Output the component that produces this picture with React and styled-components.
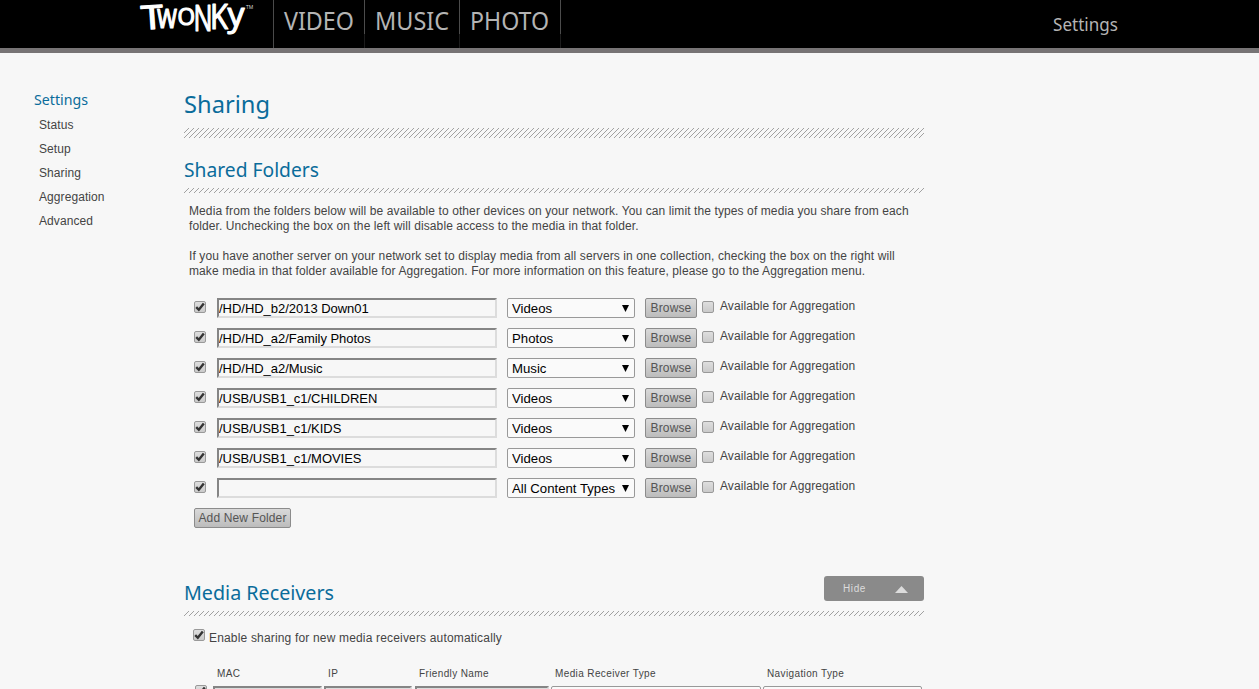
import { useState } from 'react'
import styled, { createGlobalStyle } from 'styled-components'

const navItems = [
  { name: 'VIDEO', width: 91, textWidth: 70 },
  { name: 'MUSIC', width: 95, textWidth: 74 },
  { name: 'PHOTO', width: 101, textWidth: 79 },
]

const sideItems = ['Status', 'Setup', 'Sharing', 'Aggregation', 'Advanced']

const contentTypes = ['All Content Types', 'Videos', 'Photos', 'Music']

const startFolders = [
  { path: '/HD/HD_b2/2013 Down01', type: 'Videos' },
  { path: '/HD/HD_a2/Family Photos', type: 'Photos' },
  { path: '/HD/HD_a2/Music', type: 'Music' },
  { path: '/USB/USB1_c1/CHILDREN', type: 'Videos' },
  { path: '/USB/USB1_c1/KIDS', type: 'Videos' },
  { path: '/USB/USB1_c1/MOVIES', type: 'Videos' },
  { path: '', type: 'All Content Types' },
]

const columns = [
  { name: 'MAC', width: 109, gap: 2 },
  { name: 'IP', width: 88, gap: 3 },
  { name: 'Friendly Name', width: 134, gap: 2 },
  { name: 'Media Receiver Type', width: 210, gap: 2, select: true },
  { name: 'Navigation Type', width: 159, gap: 0, select: true },
]

// text stretched to a set width, for the headings
const Fit = ({ text, width, height, size, base }) => (
  <FitSvg width={width + 4} height={height}>
    <text x="0" y={base} fontSize={size} textLength={width} lengthAdjust="spacingAndGlyphs">{text}</text>
  </FitSvg>
)

const Hatch = ({ id, height }) => (
  <HatchSvg width="740" height={height}>
    <defs>
      <pattern id={id} width="5" height="5" patternUnits="userSpaceOnUse">
        <path d="M-1 6L6 -1M-1 1L1 -1M4 6L6 4" stroke="#8b8b8b" strokeWidth="0.8" />
      </pattern>
    </defs>
    <rect width="740" height={height} fill={`url(#${id})`} />
  </HatchSvg>
)

const Check = ({ checked, onChange }) => (
  <Box type="button" role="checkbox" aria-checked={checked} onClick={onChange}>
    {checked && (
      <svg width="10" height="10" viewBox="0 0 10 10">
        <path d="M1.2 5.2L3.8 7.8L8.8 1.4" fill="none" stroke="#333" strokeWidth="2.4" />
      </svg>
    )}
  </Box>
)

const Logo = () => (
  <LogoSvg width="137" height="48" aria-label="Twonky">
    <g fill="#fff" stroke="#fff" strokeWidth="1.2" strokeLinejoin="round">
      <text x="5" y="29" fontSize="33" textLength="22" lengthAdjust="spacingAndGlyphs" transform="rotate(-4 16 16)">T</text>
      <text x="21" y="28" fontSize="34" textLength="20" lengthAdjust="spacingAndGlyphs">w</text>
      <text x="41.5" y="25" fontSize="23" textLength="17.5" lengthAdjust="spacingAndGlyphs">O</text>
      <text x="57.5" y="31" fontSize="37" textLength="19" lengthAdjust="spacingAndGlyphs">N</text>
      <text x="74" y="29" fontSize="34" textLength="18" lengthAdjust="spacingAndGlyphs">K</text>
      <text x="91.5" y="25.5" fontSize="33" textLength="17" lengthAdjust="spacingAndGlyphs">y</text>
    </g>
    <text x="110" y="8.5" fontSize="5" fill="#ddd">TM</text>
  </LogoSvg>
)

const FolderRow = ({ folder, onChange }) => (
  <Row>
    <RowCheck><Check checked={folder.shared} onChange={() => onChange({ shared: !folder.shared })} /></RowCheck>
    <PathInput value={folder.path} onChange={(e) => onChange({ path: e.target.value })} />
    <TypeSelect value={folder.type} onChange={(e) => onChange({ type: e.target.value })} />
    <Button $width={52}>Browse</Button>
    <RowCheck><Check checked={folder.aggregated} onChange={() => onChange({ aggregated: !folder.aggregated })} /></RowCheck>
    <RowLabel>Available for Aggregation</RowLabel>
  </Row>
)

const TypeSelect = ({ value, onChange }) => (
  <SelectWrap>
    <Select value={value} onChange={onChange}>
      {contentTypes.map((t) => <option key={t}>{t}</option>)}
    </Select>
    <Arrow width="7" height="7"><path d="M0 0H7L3.5 7Z" /></Arrow>
  </SelectWrap>
)

const App = () => {
  const [folders, setFolders] = useState(
    startFolders.map((f) => ({ ...f, shared: true, aggregated: false }))
  )
  const [auto, setAuto] = useState(true)
  const [receiver, setReceiver] = useState(true)
  const [open, setOpen] = useState(true)

  const changeFolder = (i, part) => {
    setFolders(folders.map((f, n) => (n === i ? { ...f, ...part } : f)))
  }

  return (
    <Page>
      <GlobalStyle />
      <Header>
        <Logo />
        <Nav>
          {navItems.map((a) => (
            <NavItem key={a.name} $width={a.width}>
              <Fit text={a.name} width={a.textWidth} height={34} size={24.5} base={30} />
            </NavItem>
          ))}
        </Nav>
        <HeaderLink><Fit text="Settings" width={65} height={26} size={17.5} base={19} /></HeaderLink>
      </Header>
      <Body>
        <Side>
          <SideTitle><Fit text="Settings" width={54} height={20} size={14.5} base={15} /></SideTitle>
          {sideItems.map((a) => <SideItem key={a}>{a}</SideItem>)}
        </Side>
        <Main>
          <Title><Fit text="Sharing" width={86} height={38} size={24} base={23} /></Title>
          <Hatch id="hatchBig" height={10} />
          <SubTitle $top={17}><Fit text="Shared Folders" width={135} height={33} size={20.5} base={22} /></SubTitle>
          <Hatch id="hatchFolders" height={5} />
          <Info>
            <p>
              Media from the folders below will be available to other devices on your network. You can limit the types of media you share from each<br />
              folder. Unchecking the box on the left will disable access to the media in that folder.
            </p>
            <p>
              If you have another server on your network set to display media from all servers in one collection, checking the box on the right will<br />
              make media in that folder available for Aggregation. For more information on this feature, please go to the Aggregation menu.
            </p>
          </Info>
          <Folders>
            {folders.map((f, i) => (
              <FolderRow key={i} folder={f} onChange={(part) => changeFolder(i, part)} />
            ))}
            <Button
              $width={97}
              onClick={() => setFolders([...folders, { path: '', type: 'All Content Types', shared: true, aggregated: false }])}
            >
              Add New Folder
            </Button>
          </Folders>
          <SectionHead>
            <SubTitle $top={5}><Fit text="Media Receivers" width={150} height={32} size={20.5} base={21} /></SubTitle>
            <Toggle onClick={() => setOpen(!open)}>
              {open ? 'Hide' : 'Show'}
              <svg width="13" height="8"><path d={open ? 'M0 8L6.5 1L13 8Z' : 'M0 1L6.5 8L13 1Z'} fill="#dcdcdc" /></svg>
            </Toggle>
          </SectionHead>
          <Hatch id="hatchMedia" height={5} />
          {open && (
            <>
              <AutoRow>
                <Check checked={auto} onChange={() => setAuto(!auto)} />
                <span>Enable sharing for new media receivers automatically</span>
              </AutoRow>
              <Receivers>
                <ReceiverCheck><Check checked={receiver} onChange={() => setReceiver(!receiver)} /></ReceiverCheck>
                {columns.map((c) => (
                  <Column key={c.name} $width={c.width} $gap={c.gap}>
                    <ColumnName>{c.name}</ColumnName>
                    <Cell $select={c.select} />
                  </Column>
                ))}
              </Receivers>
            </>
          )}
        </Main>
      </Body>
    </Page>
  )
}

const GlobalStyle = createGlobalStyle`
  * { box-sizing: border-box; }
  body { margin: 0; background: #f7f7f7; overflow: hidden; }
  svg { display: block; }
`

const Page = styled.div`
  height: 689px;
  overflow: hidden;
  background: #f7f7f7;
  color: #444;
  font: 12px/15px "Liberation Sans", Arial, sans-serif;
  letter-spacing: 0.08px;
`

const Header = styled.header`
  display: flex;
  height: 53px;
  padding-left: 136px;
  background: #000;
  border-bottom: 5px solid #777475;
  letter-spacing: 0;
`

const LogoSvg = styled.svg`
  flex: none;
  overflow: visible;
  font-family: "Open Sans", sans-serif;
  font-weight: 400;
`

const Nav = styled.nav`
  display: flex;
  border-left: 1px solid #4a4a4a;
`

const NavItem = styled.a`
  width: ${({ $width }) => $width}px;
  height: 48px;
  padding-left: 10px;
  color: #b4b4b4;
  border-right: 1px solid;
  border-image: linear-gradient(#4c4c4c 34px, #1c1c1c 34px) 1;
`

const HeaderLink = styled.a`
  margin: 12px 0 0 492px;
  color: #b4b4b4;
`

const FitSvg = styled.svg`
  fill: currentColor;
  overflow: visible;
  font-family: "Noto Sans", "Open Sans", sans-serif;
  letter-spacing: 0;
`

const HatchSvg = styled.svg`
  flex: none;
`

const Body = styled.div`
  display: flex;
`

const Side = styled.aside`
  width: 184px;
  padding: 37px 0 0 34px;
`

const SideTitle = styled.div`
  height: 23px;
  color: #0a6c9b;
`

const SideItem = styled.a`
  display: block;
  height: 24px;
  padding-left: 5px;
  line-height: 24px;
  font-size: 12px;
`

const Main = styled.main`
  width: 740px;
  padding-top: 37px;
`

const Title = styled.h1`
  margin: 0;
  color: #0a6c9b;
  font-weight: 400;
  height: 38px;
`

const SubTitle = styled.h2`
  margin: 0;
  padding-top: ${({ $top }) => $top}px;
  color: #0a6c9b;
  font-weight: 400;
`

const Info = styled.div`
  padding: 11px 0 0 5px;
  white-space: nowrap;
  letter-spacing: 0.1px;
  p { margin: 0 0 15px; }
`

const Folders = styled.div`
  padding: 4px 0 0 10px;
`

const Row = styled.div`
  display: flex;
  align-items: center;
  height: 20px;
  margin-bottom: 10px;
`

const RowCheck = styled.div`
  padding-bottom: 2px;
`

const Box = styled.button`
  flex: none;
  display: grid;
  place-items: center;
  width: 12px;
  height: 12px;
  padding: 0;
  border: 1px solid #999;
  border-radius: 2px;
  background: linear-gradient(#dedede, #cacaca);
`

const PathInput = styled.input`
  width: 280px;
  height: 20px;
  margin: 0 10px 0 11px;
  padding: 0;
  border: 2px solid;
  border-color: #858585 #dcdcdc #dcdcdc #858585;
  background: transparent;
  color: #000;
  font: 13px/16px "Liberation Sans", Arial, sans-serif;
  letter-spacing: -0.03px;
`

const SelectWrap = styled.div`
  display: grid;
  align-items: center;
  margin-right: 10px;
`

const Select = styled.select`
  grid-area: 1 / 1;
  appearance: none;
  width: 128px;
  height: 20px;
  padding: 1px 4px 0;
  border: 1px solid #999;
  border-radius: 2px;
  background: #fafafa;
  color: #000;
  font: 13.2px "Liberation Sans", Arial, sans-serif;
`

const Arrow = styled.svg`
  grid-area: 1 / 1;
  justify-self: end;
  margin: 0 6px 0 0;
  pointer-events: none;
`

const Button = styled.button`
  width: ${({ $width }) => $width}px;
  height: 20px;
  margin-right: 5px;
  padding: 0;
  border: 1px solid #8c8c8c;
  border-radius: 2px;
  background: linear-gradient(#d9d9d9, #bcbcbc);
  color: #555;
  font: 12px "Liberation Sans", Arial, sans-serif;
  letter-spacing: 0.15px;
  white-space: nowrap;
`

const RowLabel = styled.span`
  margin: 0 0 4px 6px;
`

const SectionHead = styled.div`
  display: flex;
  justify-content: space-between;
  height: 37px;
  margin-top: 46px;
`

const Toggle = styled.button`
  display: flex;
  align-items: center;
  justify-content: space-between;
  width: 100px;
  height: 25px;
  margin-top: 2px;
  padding: 0 16px 0 19px;
  border: 0;
  border-radius: 3px;
  background: #8a8a8a;
  color: #dcdcdc;
  font: 10px "Liberation Sans", Arial, sans-serif;
  letter-spacing: 0.6px;
`

const AutoRow = styled.label`
  display: flex;
  gap: 4px;
  height: 50px;
  padding: 13px 0 0 9px;
  letter-spacing: 0.17px;
  span { padding-top: 2px; }
`

const Receivers = styled.div`
  display: flex;
  padding-left: 11px;
`

const ReceiverCheck = styled.div`
  padding: 19px 6px 0 0;
`

const Column = styled.div`
  width: ${({ $width }) => $width}px;
  margin-right: ${({ $gap }) => $gap}px;
`

const ColumnName = styled.div`
  height: 20px;
  padding-left: 4px;
  font-size: 10px;
  letter-spacing: 0.38px;
`

const Cell = styled.div`
  height: 20px;
  border: ${({ $select }) => ($select ? '1px solid #999' : '2px solid')};
  border-color: ${({ $select }) => ($select ? '#999' : '#858585 #dcdcdc #dcdcdc #858585')};
  border-radius: ${({ $select }) => ($select ? 2 : 0)}px;
  background: ${({ $select }) => ($select ? '#fafafa' : '#dcdcdc')};
`

export default App
